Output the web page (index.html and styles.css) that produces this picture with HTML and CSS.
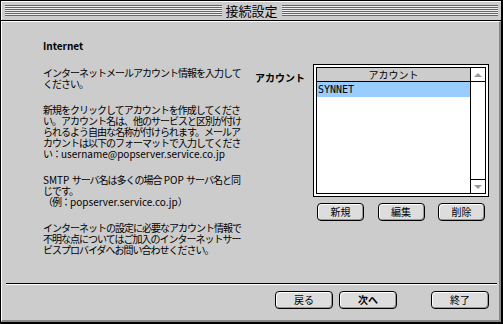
FILE: index.html
```html
<!DOCTYPE html>
<html>
<head>
  <meta charset="utf-8">
  <title>接続設定</title>
  <link rel="stylesheet" href="styles.css">
</head>
<body>
  <div class="window">
    <!-- title bar -->
    <div class="titlebar">
      <div class="stripes"></div>
      <div class="title">接続設定</div>
      <div class="stripes"></div>
    </div>

    <div class="pane">
      <div class="main">
        <div class="info">
          <p class="heading">Internet</p>
          <p>インターネットメールアカウント情報を入力して<br>ください。</p>
          <p>新規をクリックしてアカウントを作成してくださ<br>い。アカウント名は、他のサービスと区別が付け<br>られるよう自由な名称が付けられます。メールア<br>カウントは以下のフォーマットで入力してくださ<br>い：<span class="en">username@popserver.service.co.jp</span></p>
          <p><span class="en">SMTP </span>サーバ名は多くの場合<span class="en"> POP </span>サーバ名と同<br>じです。<br>（例：<span class="en">popserver.service.co.jp</span>）</p>
          <p>インターネットの設定に必要なアカウント情報で<br>不明な点についてはご加入のインターネットサー<br>ビスプロバイダへお問い合わせください。</p>
        </div>

        <div class="acct">
          <div class="acct-label">アカウント</div>
          <div>
            <div class="listbox">
              <div class="list-inner">
                <div class="table">
                  <div class="table-head">アカウント</div>
                  <div class="row selected">SYNNET</div>
                </div>
                <div class="scrollbar">
                  <div class="arrow up"></div>
                  <div class="track"></div>
                  <div class="arrow down"></div>
                </div>
              </div>
            </div>
            <div class="list-buttons">
              <button class="btn small" type="button">新規</button>
              <button class="btn small" type="button">編集</button>
              <button class="btn small" type="button">削除</button>
            </div>
          </div>
        </div>
      </div>

      <div class="footer">
        <div class="separator"></div>
        <div class="footer-buttons">
          <button class="btn wide" type="button">戻る</button>
          <button class="btn wide bold" type="button">次へ</button>
          <button class="btn wide last" type="button">終了</button>
        </div>
      </div>
    </div>
  </div>
</body>
</html>
```

FILE: styles.css
```css
body {
  margin: 0;
  background: #ccc;
  font-family: "Noto Sans CJK JP", sans-serif;
  font-size: 10px;
  color: #000;
}

/* window frame */
.window {
  width: 503px;
  height: 324px;
  box-sizing: border-box;
  border: 1px solid #000;
  border-right-width: 2px;
  border-bottom-width: 2px;
  display: flex;
  flex-direction: column;
  background: #ccc;
}

.titlebar {
  height: 20px;
  box-sizing: border-box;
  display: flex;
  align-items: center;
  padding: 0 3px 0 4px;
  background: #ccc;
  border-bottom: 1px solid #000;
  box-shadow: inset 1px 1px #fff;
}

.stripes {
  flex: 1;
  height: 11px;
  background: repeating-linear-gradient(#666 0 1px, #eee 1px 2px);
}

.title {
  padding: 0 4px;
  font-size: 13px;
  line-height: 16px;
}

/* content pane */
.pane {
  flex: 1;
  display: flex;
  flex-direction: column;
  border-top: 1px solid #fff;
  border-left: 1px solid #fff;
  border-right: 2px solid #888;
  border-bottom: 2px solid #888;
}

.main {
  flex: 1;
  display: flex;
  align-items: flex-start;
  padding: 18px 0 0 41px;
}

.info {
  width: 212px;
  line-height: 11px;
  letter-spacing: -1px;
  white-space: nowrap;
}

.info p {
  margin: 0 0 15px;
}

.info .en {
  letter-spacing: 0;
  white-space: pre;
}

.info .heading {
  font-weight: bold;
  letter-spacing: 0;
  margin-bottom: 16px;
}

.acct {
  display: flex;
  align-items: flex-start;
  margin-top: 24px;
}

.acct-label {
  width: 58px;
  margin-top: 8px;
  line-height: 11px;
  font-weight: bold;
}

/* account list */
.listbox {
  width: 176px;
  height: 133px;
  box-sizing: border-box;
  border: 1px solid #000;
  padding: 2px;
  background: #fff;
}

.list-inner {
  height: 100%;
  box-sizing: border-box;
  border: 1px solid #000;
  display: flex;
}

.table {
  flex: 1;
}

.table-head {
  height: 14px;
  box-sizing: border-box;
  border-bottom: 1px solid #000;
  background: #ccc;
  text-align: center;
  line-height: 13px;
}

.row {
  height: 15px;
  padding-left: 1px;
  font-family: "DejaVu Sans Mono", monospace;
  font-size: 10px;
  line-height: 15px;
}

.selected {
  background: #9cf;
}

.scrollbar {
  width: 14px;
  border-left: 1px solid #000;
  display: flex;
  flex-direction: column;
}

.track {
  flex: 1;
}

.arrow {
  height: 14px;
  box-sizing: border-box;
  display: flex;
  align-items: center;
  justify-content: center;
}

.arrow.up {
  border-bottom: 1px solid #000;
}

.arrow.down {
  border-top: 1px solid #000;
}

.arrow::after {
  content: "";
  border-left: 4px solid transparent;
  border-right: 4px solid transparent;
}

.arrow.up::after {
  border-bottom: 4px solid #999;
}

.arrow.down::after {
  border-top: 4px solid #999;
}

/* push buttons */
.btn {
  height: 18px;
  padding: 0;
  box-sizing: border-box;
  border: 1px solid #000;
  border-radius: 4px;
  background: #ddd;
  box-shadow: inset 1px 1px #fff, inset -1px -1px #999;
  font-family: "Noto Sans CJK JP", sans-serif;
  font-size: 10px;
  line-height: 14px;
  color: #000;
}

.btn.small {
  width: 47px;
}

.btn.wide {
  width: 58px;
}

.btn.bold {
  font-weight: bold;
}

.list-buttons {
  display: flex;
  justify-content: space-between;
  padding: 6px 4px 0;
}

/* footer */
.footer {
  padding-bottom: 11px;
}

.separator {
  margin: 0 2px 0 4px;
  border-top: 1px solid #000;
  border-bottom: 1px solid #fff;
}

.footer-buttons {
  display: flex;
  justify-content: flex-end;
  gap: 6px;
  padding: 6px 10px 0 0;
}

.footer-buttons .last {
  margin-left: 28px;
}
```
